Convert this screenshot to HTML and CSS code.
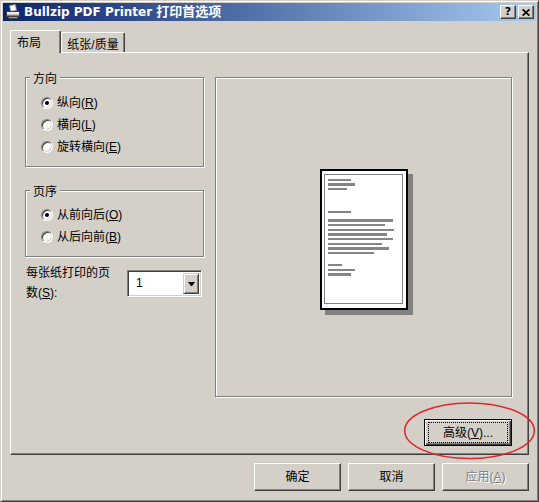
FILE: index.html
```html
<!DOCTYPE html>
<html lang="zh-CN">
<head>
<meta charset="utf-8">
<title>Bullzip PDF Printer 打印首选项</title>
<link rel="stylesheet" href="styles.css">
</head>
<body>
<div class="window">
  <div class="titlebar">
    <svg class="app-icon" width="16" height="16" viewBox="0 0 16 16">
      <path d="M4.5 1.5 L10.5 0.5 L11.5 6.5 L5.5 7.5 Z" fill="#fff" stroke="#808080"/>
      <path d="M1.5 7.5 h13 v5 h-13 z" fill="#c0c0c0" stroke="#404040"/>
      <rect x="2" y="8" width="12" height="2" fill="#ececec"/>
      <rect x="2" y="11" width="12" height="1" fill="#808080"/>
      <path d="M3.5 12.5 h9 v2 h-9 z" fill="#a0a0a0" stroke="#404040"/>
    </svg>
    <span class="title">Bullzip PDF Printer <span class="title-cjk">打印首选项</span></span>
    <div class="caption-buttons">
      <span class="cap-btn help">?</span>
      <span class="cap-btn close">
        <svg width="8" height="7" viewBox="0 0 8 7"><path d="M0.6 0.4 L7.4 6.6 M7.4 0.4 L0.6 6.6" stroke="#000" stroke-width="1.7" fill="none"/></svg>
      </span>
    </div>
  </div>

  <div class="client">
    <div class="tabs">
      <div class="tab selected">布局</div>
      <div class="tab second">纸张/质量</div>
    </div>

    <div class="panel">
      <div class="left-col">
        <div class="group g-orient">
          <span class="legend">方向</span>
          <div class="radio-row"><span class="radio checked"></span><span>纵向(<u>R</u>)</span></div>
          <div class="radio-row"><span class="radio"></span><span>横向(<u>L</u>)</span></div>
          <div class="radio-row"><span class="radio"></span><span>旋转横向(<u>E</u>)</span></div>
        </div>
        <div class="group g-order">
          <span class="legend">页序</span>
          <div class="radio-row"><span class="radio checked"></span><span>从前向后(<u>O</u>)</span></div>
          <div class="radio-row"><span class="radio"></span><span>从后向前(<u>B</u>)</span></div>
        </div>
        <div class="pages-row">
          <div class="pages-label">每张纸打印的页<br>数(<u>S</u>):</div>
          <div class="combo">
            <span class="combo-value">1</span>
            <span class="combo-btn">
              <svg width="7" height="4" viewBox="0 0 7 4"><path d="M0 0 H7 L4 4 H3 Z" fill="#000"/></svg>
            </span>
          </div>
        </div>
      </div>

      <div class="right-col">
        <div class="preview">
          <svg class="page" width="93" height="146" viewBox="0 0 93 146">
            <rect x="5" y="5" width="88" height="141" fill="#808080"/>
            <rect x="1" y="1" width="86" height="139" fill="#fff" stroke="#000" stroke-width="2"/>
            <rect x="4.5" y="5.5" width="78" height="129" fill="none" stroke="#808080"/>
            <g fill="#858585">
              <rect x="8" y="10" width="23" height="2"/>
              <rect x="8" y="14" width="27" height="3"/>
              <rect x="8" y="19" width="19" height="2"/>
              <rect x="8" y="42" width="23" height="2"/>
              <rect x="8" y="50" width="65" height="3"/>
              <rect x="8" y="55" width="57" height="2"/>
              <rect x="8" y="60" width="66" height="2"/>
              <rect x="8" y="64" width="59" height="3"/>
              <rect x="8" y="69" width="65" height="2"/>
              <rect x="8" y="74" width="54" height="2"/>
              <rect x="8" y="78" width="61" height="3"/>
              <rect x="8" y="83" width="46" height="2"/>
              <rect x="8" y="95" width="14" height="2"/>
              <rect x="8" y="100" width="27" height="2"/>
              <rect x="8" y="104" width="23" height="3"/>
            </g>
          </svg>
        </div>
        <button class="btn default">高级(<u>V</u>)...</button>
      </div>
    </div>

    <div class="buttons">
      <button class="btn">确定</button>
      <button class="btn">取消</button>
      <button class="btn disabled">应用(<u>A</u>)</button>
    </div>
  </div>

  <svg class="annotation" width="539" height="502" viewBox="0 0 539 502">
    <ellipse cx="469.5" cy="430.7" rx="64.8" ry="27.8" fill="none" stroke="#e2262d" stroke-width="1.5"/>
  </svg>
</div>
</body>
</html>
```

FILE: styles.css
```css
* { box-sizing: border-box; }

html, body {
  margin: 0;
  padding: 0;
}

body {
  background: #d4d0c8;
  font-family: "Liberation Sans", "Noto Sans CJK SC", sans-serif;
  font-size: 12px;
  color: #000;
}

u { text-decoration: underline; text-underline-offset: 1px; }

.window {
  position: relative;
  width: 539px;
  height: 502px;
  background: #d4d0c8;
  border: 1px solid;
  border-color: #d4d0c8 #404040 #404040 #d4d0c8;
  box-shadow: inset 1px 1px #fff, inset -1px -1px #808080;
  padding: 2px;
  display: flex;
  flex-direction: column;
}

/* ---------- title bar ---------- */
.titlebar {
  height: 18px;
  display: flex;
  align-items: center;
  padding: 0 2px;
  background: linear-gradient(to right, #0a246a, #a6caf0);
}

.app-icon { flex: none; display: block; }

.title {
  margin-left: 3px;
  color: #fff;
  font-family: "DejaVu Sans", "Noto Sans CJK SC", sans-serif;
  font-weight: bold;
  font-size: 12px;
  line-height: 16px;
  white-space: nowrap;
}

.title-cjk { font-size: 13px; }

.caption-buttons {
  margin-left: auto;
  display: flex;
  gap: 2px;
}

.cap-btn {
  width: 16px;
  height: 14px;
  display: flex;
  align-items: center;
  justify-content: center;
  background: #d4d0c8;
  border: 1px solid;
  border-color: #fff #404040 #404040 #fff;
  box-shadow: inset -1px -1px #808080;
}

.cap-btn.help {
  font-family: "DejaVu Sans", sans-serif;
  font-weight: bold;
  font-size: 11px;
  line-height: 12px;
  padding-bottom: 1px;
}

.cap-btn svg { display: block; }

/* ---------- client ---------- */
.client {
  flex: 1;
  display: flex;
  flex-direction: column;
  padding: 9px 7px 0 7px;
}

.tabs {
  height: 22px;
  display: flex;
  align-items: flex-end;
}

.tab {
  height: 20px;
  background: #d4d0c8;
  border: 1px solid;
  border-bottom: none;
  border-color: #fff #404040 #fff #fff;
  box-shadow: inset -1px 0 #808080;
  border-radius: 2px 2px 0 0;
  line-height: 14px;
  padding-top: 4px;
  white-space: nowrap;
}

.tab.selected {
  width: 51px;
  height: 23px;
  margin-bottom: -1px;
  position: relative;
  z-index: 1;
  padding-left: 6px;
  padding-top: 5px;
}

.tab.second {
  width: 64px;
  text-align: center;
  padding-top: 5px;
}

.panel {
  height: 403px;
  display: flex;
  align-items: flex-start;
  border: 1px solid;
  border-color: #fff #404040 #404040 #fff;
  box-shadow: inset -1px -1px #808080;
  padding: 24px 0 0 14px;
}

.left-col {
  width: 179px;
  display: flex;
  flex-direction: column;
}

.group {
  position: relative;
  border: 1px solid #808080;
  box-shadow: inset 1px 1px #fff, 1px 1px #fff;
  padding: 14px 0 0 15px;
}

.g-orient { height: 90px; }

.g-order {
  height: 67px;
  margin-top: 23px;
  padding-top: 13px;
}

.legend {
  position: absolute;
  top: -6px;
  left: 4px;
  padding: 0 3px;
  background: #d4d0c8;
  line-height: 14px;
}

.radio-row {
  height: 22px;
  display: flex;
  align-items: center;
  gap: 4px;
  line-height: 22px;
  white-space: nowrap;
}

.radio {
  position: relative;
  flex: none;
  width: 12px;
  height: 12px;
  border-radius: 50%;
  background: #fff;
  border: 1px solid;
  border-color: #808080 #fff #fff #808080;
  box-shadow: inset 1px 1px 0 #404040, inset -1px -1px 0 #d4d0c8;
}

.radio.checked::after {
  content: "";
  position: absolute;
  left: 3px;
  top: 3px;
  width: 4px;
  height: 4px;
  border-radius: 50%;
  background: #000;
}

.pages-row {
  margin-top: 7px;
  display: flex;
  align-items: flex-start;
}

.pages-label {
  width: 102px;
  padding-left: 1px;
  line-height: 19.5px;
  white-space: nowrap;
}

.combo {
  margin-top: 6px;
  width: 75px;
  height: 27px;
  display: flex;
  background: #fff;
  border: 1px solid;
  border-color: #808080 #fff #fff #808080;
  box-shadow: inset 1px 1px #404040, inset -1px -1px #d4d0c8;
  padding: 2px;
}

.combo-value {
  flex: 1;
  padding-left: 6px;
  line-height: 21px;
}

.combo-btn {
  width: 16px;
  display: flex;
  align-items: center;
  justify-content: center;
  background: #d4d0c8;
  border: 1px solid;
  border-color: #d4d0c8 #404040 #404040 #d4d0c8;
  box-shadow: inset 1px 1px #fff, inset -1px -1px #808080;
}

.combo-btn svg { display: block; }

.right-col {
  margin-left: 11px;
  width: 297px;
  display: flex;
  flex-direction: column;
  align-items: flex-end;
}

.preview {
  width: 297px;
  height: 320px;
  display: flex;
  align-items: center;
  justify-content: center;
  border: 1px solid #808080;
  box-shadow: inset 1px 1px #fff, 1px 1px #fff;
}

.page {
  display: block;
  margin-left: 5px;
  margin-top: 10px;
}

/* ---------- buttons ---------- */
.btn {
  position: relative;
  width: 87px;
  height: 28px;
  padding: 0;
  font: inherit;
  color: #000;
  background: #d4d0c8;
  border: 1px solid;
  border-color: #fff #404040 #404040 #fff;
  box-shadow: inset -1px -1px #808080;
  display: flex;
  align-items: center;
  justify-content: center;
  line-height: 14px;
}

.btn.default {
  width: 88px;
  height: 27px;
  margin-top: 22px;
  border: 1px solid #000;
  box-shadow: inset 1px 1px #fff, inset -1px -1px #404040, inset -2px -2px #808080;
}

.btn.default::after {
  content: "";
  position: absolute;
  left: 3px;
  top: 2px;
  right: 3px;
  bottom: 2px;
  border: 1px dotted #000;
}

.btn.disabled {
  color: #808080;
  text-shadow: 1px 1px #fff;
}

.buttons {
  margin-top: 8px;
  display: flex;
  justify-content: flex-end;
  gap: 7px;
}

.annotation {
  position: absolute;
  left: -1px;
  top: -1px;
  pointer-events: none;
}
```
